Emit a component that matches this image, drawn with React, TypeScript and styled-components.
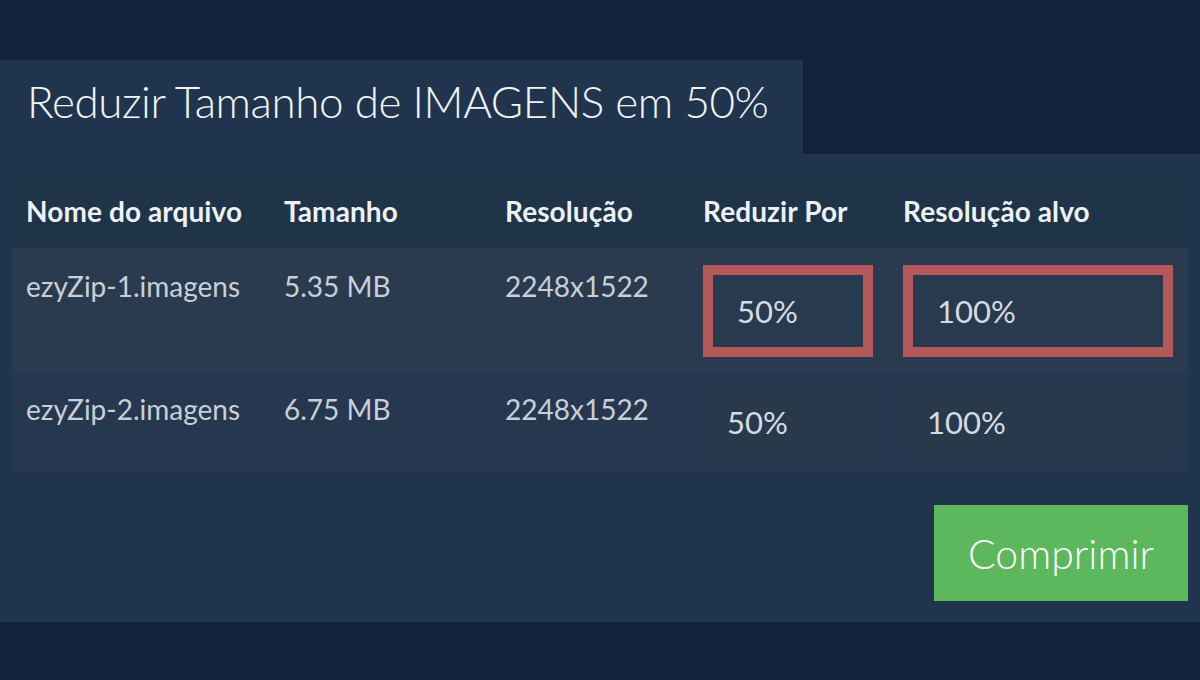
import React from "react";
import styled, { createGlobalStyle } from "styled-components";

const Global = createGlobalStyle`
  html, body { margin: 0; padding: 0; }
  body {
    background: #10233a;
    font-family: Lato, "Open Sans", "Liberation Sans", sans-serif;
    width: 1200px;
    height: 680px;
    overflow: hidden;
  }
`;

const Page = styled.div`
  width: 1200px;
  height: 680px;
  padding-top: 60px;
  box-sizing: border-box;
  background: #10233a;
`;

const Tab = styled.div`
  width: 803px;
  height: 94px;
  background: #20354d;
  display: flex;
  align-items: center;
  padding-left: 27px;
  box-sizing: border-box;
`;

const Title = styled.h1`
  margin: 0 0 13px;
  font-weight: 300;
  font-size: 44px;
  color: #f2f4f6;
  letter-spacing: -0.42px;
`;

const Panel = styled.div`
  background: #20354d;
  height: 468px;
  box-sizing: border-box;
  padding: 20px 12px 20px;
  display: flex;
  flex-direction: column;
`;

const Table = styled.div`
  display: grid;
  grid-template-columns: 258px 221px 198px 200px 299px;
`;

const HeadCell = styled.div`
  background: #1f3349;
  height: 74px;
  display: flex;
  align-items: center;
  padding: 0 14px 0;
  box-sizing: border-box;
  font-weight: 700;
  font-size: 28px;
  letter-spacing: 0.1px;
  color: #eef1f4;
  white-space: nowrap;
`;

const Cell = styled.div<{ $row: number }>`
  background: ${(p) => (p.$row === 0 ? "#2a3b4f" : "#25384f")};
  padding: ${(p) => (p.$row === 0 ? "22px 14px 14px" : "22px 14px 15px")};
  box-sizing: border-box;
  font-size: 28px;
  color: #c9cfd6;
  white-space: nowrap;
  line-height: 1.2;
`;

const InputCell = styled.div<{ $row: number }>`
  background: ${(p) => (p.$row === 0 ? "#2a3b4f" : "#25384f")};
  padding: ${(p) => (p.$row === 0 ? "17px 14px 14px" : "14px 14px 15px")};
  box-sizing: border-box;
`;

const ValueBox = styled.div<{ $hl: boolean; $w: number }>`
  width: ${(p) => p.$w}px;
  height: ${(p) => (p.$hl ? 92 : 73)}px;
  box-sizing: border-box;
  border: ${(p) => (p.$hl ? "10px solid #b5585a" : "none")};
  background: ${(p) => (p.$hl ? "#283a4e" : "#29394c")};
  display: flex;
  align-items: center;
  padding-left: 24px;
  font-size: 31px;
  color: #d5dbe1;
`;

const Footer = styled.div`
  display: flex;
  justify-content: flex-end;
  margin-top: 32px;
`;

const Button = styled.button`
  width: 254px;
  height: 96px;
  background: #5cb85c;
  border: none;
  color: #ffffff;
  font-family: Lato, "Open Sans", sans-serif;
  font-weight: 300;
  font-size: 41px;
  padding: 0;
  cursor: pointer;
`;

const rows = [
  { name: "ezyZip-1.imagens", size: "5.35 MB", res: "2248x1522", hl: true },
  { name: "ezyZip-2.imagens", size: "6.75 MB", res: "2248x1522", hl: false },
];

const headers = ["Nome do arquivo", "Tamanho", "Resolução", "Reduzir Por", "Resolução alvo"];

export default function App() {
  return (
    <Page>
      <Global />
      <Tab>
        <Title>Reduzir Tamanho de IMAGENS em 50%</Title>
      </Tab>
      <Panel>
        <Table>
          {headers.map((h) => (
            <HeadCell key={h}>{h}</HeadCell>
          ))}
          {rows.map((r, i) => (
            <React.Fragment key={r.name}>
              <Cell $row={i}>{r.name}</Cell>
              <Cell $row={i}>{r.size}</Cell>
              <Cell $row={i}>{r.res}</Cell>
              <InputCell $row={i}>
                <ValueBox $hl={r.hl} $w={170}>50%</ValueBox>
              </InputCell>
              <InputCell $row={i}>
                <ValueBox $hl={r.hl} $w={270}>100%</ValueBox>
              </InputCell>
            </React.Fragment>
          ))}
        </Table>
        <Footer>
          <Button>Comprimir</Button>
        </Footer>
      </Panel>
    </Page>
  );
}
